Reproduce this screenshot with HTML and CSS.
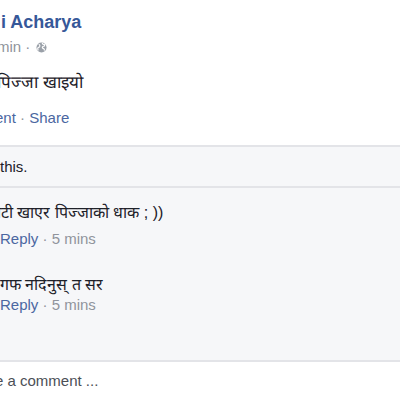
FILE: index.html
```html
<!DOCTYPE html>
<html>
<head>
<meta charset="utf-8">
<link rel="stylesheet" href="styles.css">
</head>
<body>
<div class="post">
  <div class="head">
    <div class="name">i Acharya</div>
    <div class="meta">min · <svg class="globe" width="11" height="11" viewBox="0 0 12 12"><circle cx="6" cy="6" r="5.5" fill="#9aa0a8"/><path d="M3 2.5c1 .5 1.5 1.5 1 2.5-.5.8-1.6.7-2 1.6-.3.8.3 1.6.2 2.6M7 1c-.3 1 .6 1.6 1.5 1.5.9 0 1.2 1 .7 1.6-.6.7-1.8.4-2.2 1.3-.4.9.5 1.6 1.3 1.8.8.2 1 1.2.6 2" stroke="#fff" stroke-width="1.3" fill="none"/></svg></div>
  </div>
  <div class="text">पिज्जा खाइयो</div>
  <div class="actions"><span class="link">ent</span> · <span class="link">Share</span></div>
</div>
<div class="comments">
  <div class="likes">this.</div>
  <div class="list">
    <div class="comment">
      <div class="ctext first">रोटी खाएर पिज्जाको धाक ; ))</div>
      <div class="cmeta"><span class="link">Reply</span> · 5 mins</div>
    </div>
    <div class="comment">
      <div class="ctext">गफ नदिनुस् त सर</div>
      <div class="cmeta tight"><span class="link">Reply</span> · 5 mins</div>
    </div>
  </div>
</div>
<div class="write">e a comment ...</div>
</body>
</html>
```
FILE: styles.css
```css
html, body {
  margin: 0;
  padding: 0;
  background: #fff;
  width: 400px;
  height: 400px;
  overflow: hidden;
  font-family: "Liberation Sans", Arial, sans-serif;
}
.post {
  height: 145px;
  box-sizing: border-box;
  padding-top: 11px;
}
.name {
  font-size: 18px;
  font-weight: bold;
  color: #365899;
  line-height: 22px;
  text-indent: 1px;
}
.meta {
  margin-top: 4px;
  font-size: 15px;
  color: #90949c;
  line-height: 20px;
  display: flex;
  align-items: center;
  white-space: pre;
  margin-left: -3px;
}
.globe { margin-left: 1px; }
.text {
  margin-top: 14px;
  font-size: 17px;
  color: #1d2129;
  line-height: 24px;
  text-indent: -3px;
}
.actions {
  margin-top: 13px;
  font-size: 15px;
  color: #90949c;
  line-height: 20px;
  text-indent: -5px;
}
.link { color: #4b67a1; }
.comments {
  background: #f6f7f9;
  border-top: 2px solid #e3e4e8;
  border-bottom: 2px solid #e3e4e8;
}
.likes {
  height: 41px;
  box-sizing: border-box;
  padding-top: 11px;
  font-size: 15px;
  color: #1d2129;
  line-height: 18px;
  border-bottom: 2px solid #e3e4e8;
}
.list {
  height: 172px;
  box-sizing: border-box;
  padding-top: 14px;
}
.comment { margin-bottom: 26px; }
.ctext {
  font-size: 16px;
  color: #1d2129;
  line-height: 22px;
}
.ctext.first { text-indent: -10px; }
.cmeta {
  margin-top: 6px;
  font-size: 15px;
  color: #90949c;
  line-height: 18px;
}
.cmeta.tight { margin-top: 0; }
.write {
  padding-top: 10px;
  font-size: 15px;
  color: #4b4f56;
  line-height: 18px;
  text-indent: -5px;
}
```
